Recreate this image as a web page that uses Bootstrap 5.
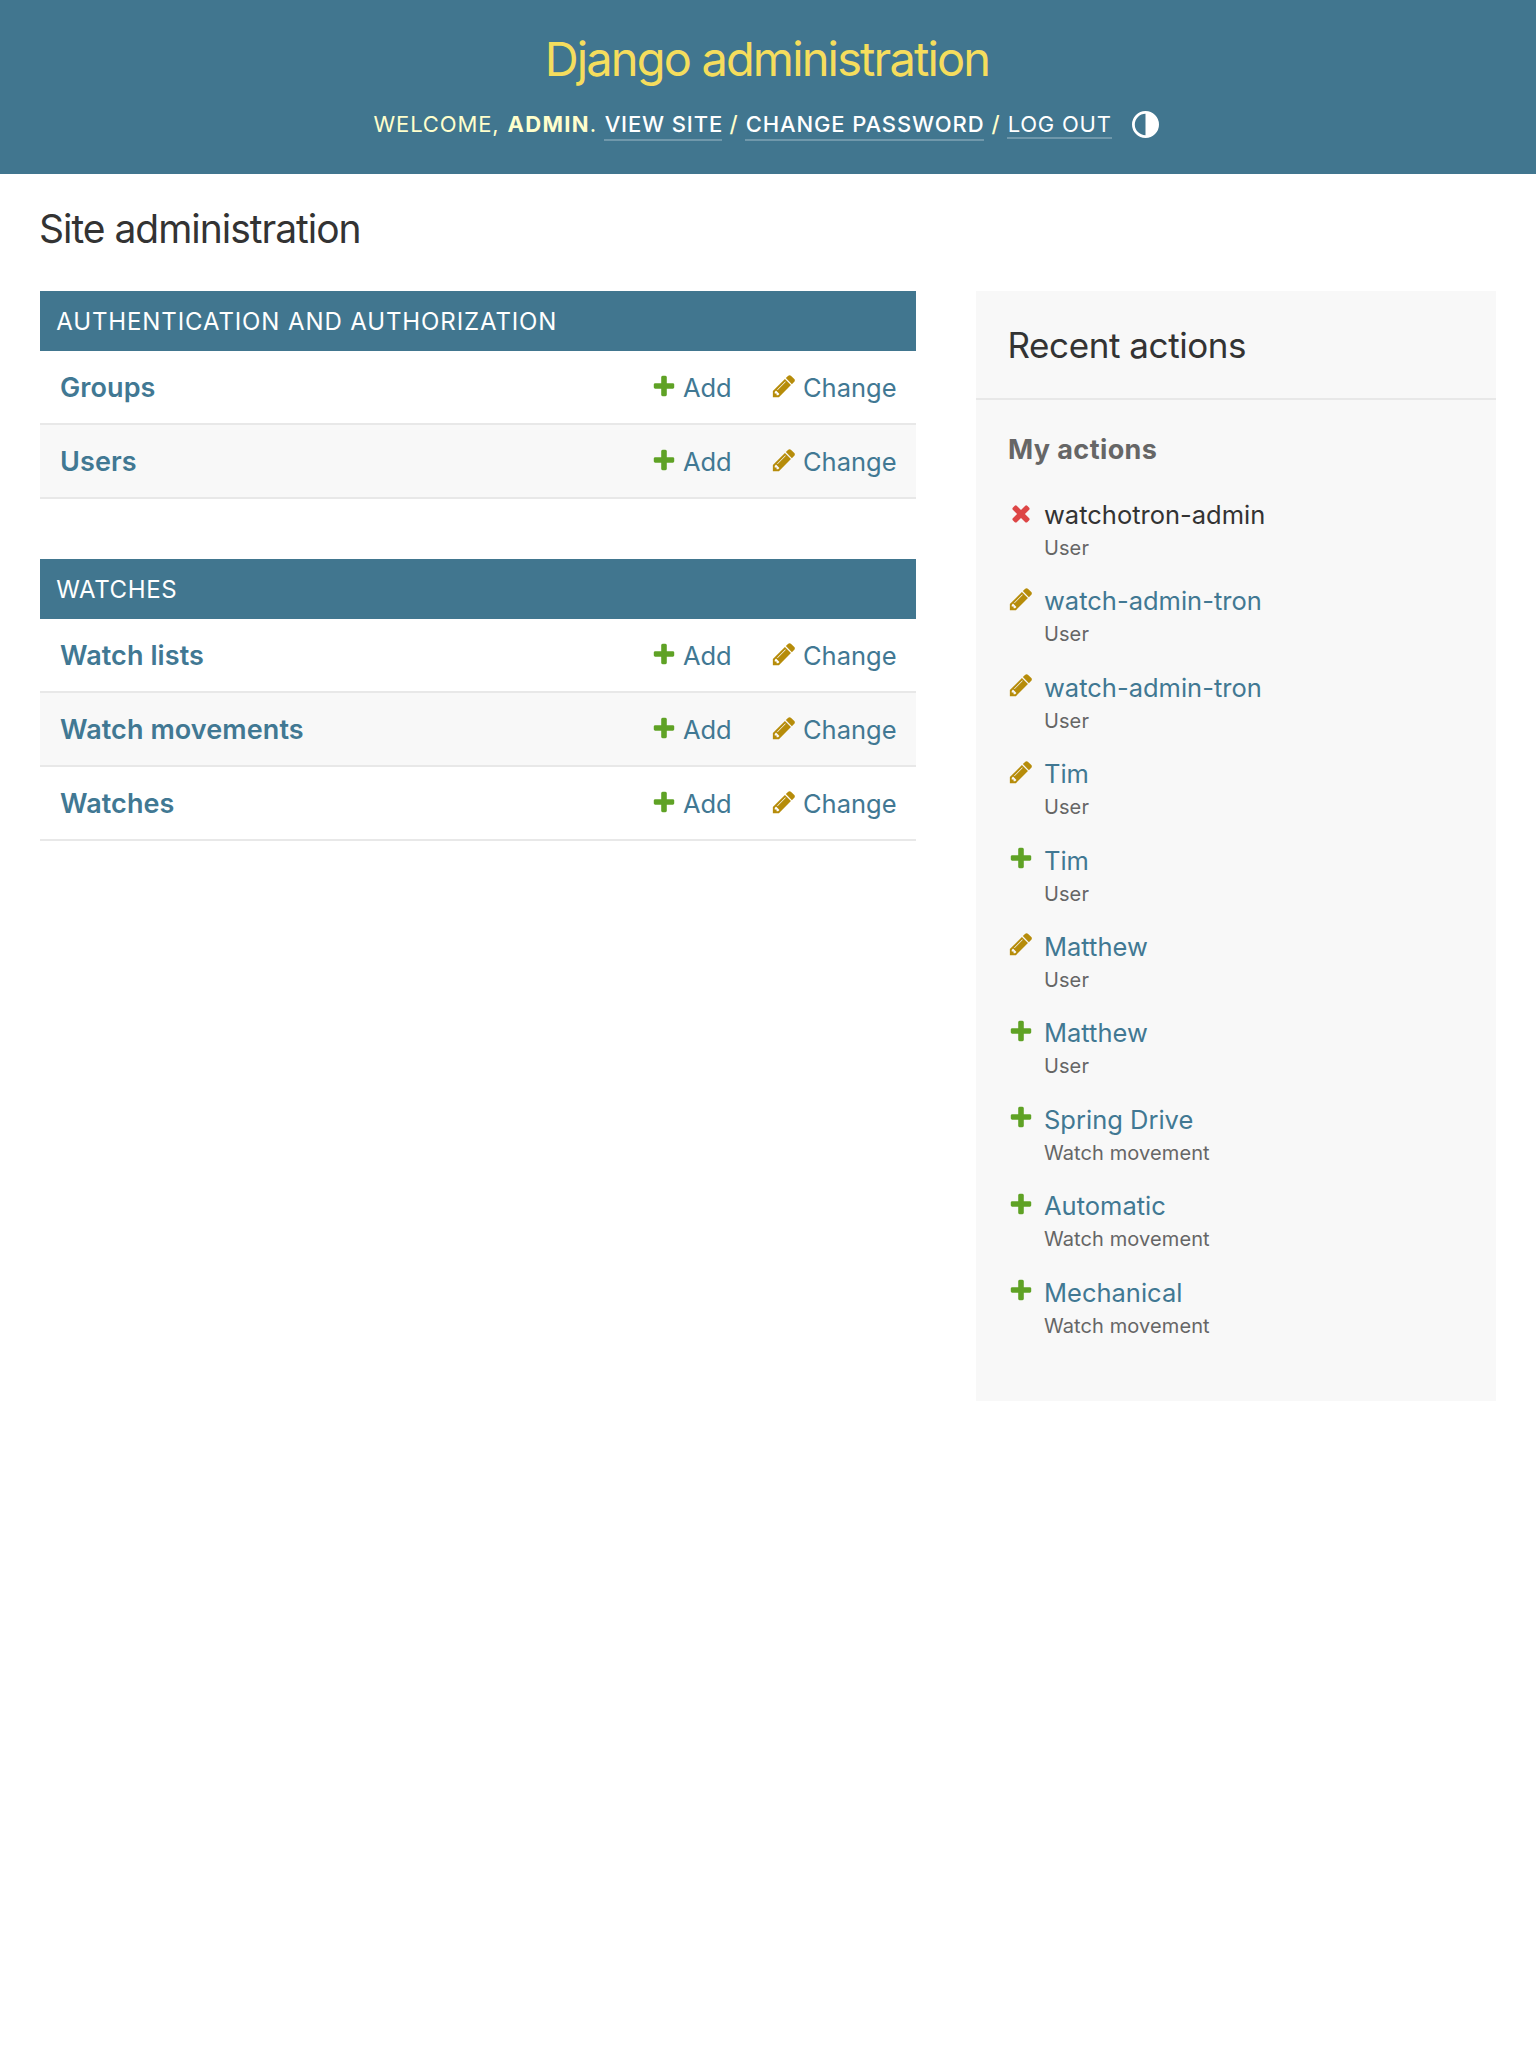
<!DOCTYPE html>
<html lang="en">
<head>
<meta charset="utf-8">
<meta name="viewport" content="width=device-width, initial-scale=1">
<title>Site administration | Django site admin</title>
<link rel="stylesheet" href="https://cdn.jsdelivr.net/npm/bootstrap@5.3.0/dist/css/bootstrap.min.css">
<style>
:root{--teal:#41768f;--link-c:#417893;--hair:#e8e8e8;--soft:#f8f8f8}
body{font-family:Inter,"Liberation Sans",sans-serif;color:#333;background:#fff}
a{color:var(--link-c);text-decoration:none}
.site-head{background:var(--teal);height:174px;padding-top:29px}
.site-title{font-size:47px;line-height:60px;font-weight:400;letter-spacing:-1.86px;color:#f5dd5d;padding-right:2px}
.user-tools{margin-top:20px;margin-right:3.4px;font-size:22px;line-height:30px;letter-spacing:.86px;color:#ffffcc;height:32px}
.user-tools a{color:#fff;border-bottom:2px solid rgba(255,255,255,.25);padding-left:.6px}
.w-hello{width:134px}.w-name{width:96.5px}
.w-name b{letter-spacing:1.3px}
.w-view{width:118px}.w-pass{width:239px;letter-spacing:.88px}
.w-view,.w-pass,.w-sep{font-weight:500}
.w-out{width:105px;height:30px;letter-spacing:.76px}
.w-sep{width:23px;padding-left:1px}
.theme-icon{width:27px;height:27px;margin:2px 0 0 20px}
.page-body{padding:30px 40px 0}
.page-title{font-size:39px;line-height:50px;font-weight:400;letter-spacing:-1.02px;margin:0 0 37px -1px}
.main-col{width:876px}
.side-col{width:520px;height:1110px;background:var(--soft)}
.app-module{margin-bottom:60px}
.app-caption{background:var(--teal);color:#fff;font-size:24px;height:60px;line-height:62px;font-weight:400;letter-spacing:.89px;padding-left:16.2px}
.app-caption.tight{letter-spacing:.6px}
.model-row{height:74px;border-bottom:2px solid var(--hair);padding-left:20px}
.model-row.shaded{background:var(--soft)}
.model-name{font-size:27px;line-height:74px;height:72px;font-weight:600;letter-spacing:.09px}
.act{font-size:25.5px;line-height:73px;height:72px;gap:6.2px}
.act svg{margin-top:22.2px}
.act-add{width:119.6px;letter-spacing:-.15px}.act-change{width:145.5px}
.act-change svg{margin-left:.3px}
.ico{width:26px;height:26px;flex:none}
.side-title{font-size:35px;line-height:108px;height:109px;font-weight:400;letter-spacing:-.42px;border-bottom:2px solid var(--hair);padding-left:31.5px}
.side-sub{font-size:27px;line-height:40px;font-weight:700;color:#666;letter-spacing:.4px;padding:30px 0 0 32px}
.act-list{padding:28.1px 0 0 31.8px}
.act-item{height:86.4px;gap:10.2px}
.act-item svg{margin-top:1.3px}
.act-item:first-child svg{margin:2px -.5px 0 .5px}
.act-title{font-size:25.5px;line-height:34px}
.act-kind{font-size:20px;line-height:30px;margin-top:1px;color:#666;letter-spacing:.1px}
</style>
</head>
<body>
<svg class="d-none" xmlns="http://www.w3.org/2000/svg">
<symbol id="i-add" viewBox="0 0 1792 1792"><path fill="#5fa225" d="M1600 796v192q0 40-28 68t-68 28h-416v416q0 40-28 68t-68 28h-192q-40 0-68-28t-28-68v-416h-416q-40 0-68-28t-28-68v-192q0-40 28-68t68-28h416v-416q0-40 28-68t68-28h192q40 0 68 28t28 68v416h416q40 0 68 28t28 68z"/></symbol>
<symbol id="i-change" viewBox="0 0 1792 1792"><path fill="#b68c0a" d="M491 1536l91-91-235-235-91 91v107h128v128h107zm523-928q0-22-22-22-10 0-17 7l-542 542q-7 7-7 17 0 22 22 22 10 0 17-7l542-542q7-7 7-17zm-54-192l416 416-832 832h-416v-416zm683 96q0 53-37 90l-166 166-416-416 166-165q36-38 90-38 53 0 91 38l235 234q37 39 37 91z"/></symbol>
<symbol id="i-delete" viewBox="0 0 1792 1792"><path fill="#dd4646" d="M1490 1322q0 40-28 68l-136 136q-28 28-68 28t-68-28l-294-294-294 294q-28 28-68 28t-68-28l-136-136q-28-28-28-68t28-68l294-294-294-294q-28-28-28-68t28-68l136-136q28-28 68-28t68 28l294 294 294-294q28-28 68-28t68 28l136 136q28 28 28 68t-28 68l-294 294 294 294q28 28 28 68z"/></symbol>
</svg>

<header class="site-head text-center">
  <h1 class="site-title mb-0">Django administration</h1>
  <div class="user-tools d-flex justify-content-center text-start text-nowrap">
    <span class="w-hello">WELCOME,</span>
    <span class="w-name"><b>ADMIN</b>.</span>
    <a class="w-view" href="#">VIEW SITE</a>
    <span class="w-sep text-center">/</span>
    <a class="w-pass" href="#">CHANGE PASSWORD</a>
    <span class="w-sep text-center">/</span>
    <a class="w-out" href="#">LOG OUT</a>
    <svg class="theme-icon" viewBox="0 0 27 27"><circle cx="13.5" cy="13.5" r="12.1" fill="none" stroke="#fff" stroke-width="2.8"/><path d="M13.5 1a12.5 12.5 0 0 1 0 25z" fill="#fff"/></svg>
  </div>
</header>

<main class="page-body">
  <h2 class="page-title">Site administration</h2>
  <div class="d-flex justify-content-between align-items-start">
    <div class="main-col">
      <section class="app-module">
        <h3 class="app-caption mb-0">AUTHENTICATION AND AUTHORIZATION</h3>
        <div class="model-row d-flex"><a class="model-name me-auto" href="#">Groups</a><a class="act act-add d-flex" href="#"><svg class="ico"><use href="#i-add"/></svg>Add</a><a class="act act-change d-flex" href="#"><svg class="ico"><use href="#i-change"/></svg>Change</a></div>
        <div class="model-row shaded d-flex"><a class="model-name me-auto" href="#">Users</a><a class="act act-add d-flex" href="#"><svg class="ico"><use href="#i-add"/></svg>Add</a><a class="act act-change d-flex" href="#"><svg class="ico"><use href="#i-change"/></svg>Change</a></div>
      </section>
      <section class="app-module">
        <h3 class="app-caption tight mb-0">WATCHES</h3>
        <div class="model-row d-flex"><a class="model-name me-auto" href="#">Watch lists</a><a class="act act-add d-flex" href="#"><svg class="ico"><use href="#i-add"/></svg>Add</a><a class="act act-change d-flex" href="#"><svg class="ico"><use href="#i-change"/></svg>Change</a></div>
        <div class="model-row shaded d-flex"><a class="model-name me-auto" href="#">Watch movements</a><a class="act act-add d-flex" href="#"><svg class="ico"><use href="#i-add"/></svg>Add</a><a class="act act-change d-flex" href="#"><svg class="ico"><use href="#i-change"/></svg>Change</a></div>
        <div class="model-row d-flex"><a class="model-name me-auto" href="#">Watches</a><a class="act act-add d-flex" href="#"><svg class="ico"><use href="#i-add"/></svg>Add</a><a class="act act-change d-flex" href="#"><svg class="ico"><use href="#i-change"/></svg>Change</a></div>
      </section>
    </div>
    <aside class="side-col">
      <h2 class="side-title mb-0">Recent actions</h2>
      <h3 class="side-sub mb-0">My actions</h3>
      <ul class="act-list list-unstyled mb-0">
        <li class="act-item d-flex"><svg class="ico"><use href="#i-delete"/></svg><div><div class="act-title">watchotron-admin</div><div class="act-kind">User</div></div></li>
        <li class="act-item d-flex"><svg class="ico"><use href="#i-change"/></svg><div><div class="act-title"><a href="#">watch-admin-tron</a></div><div class="act-kind">User</div></div></li>
        <li class="act-item d-flex"><svg class="ico"><use href="#i-change"/></svg><div><div class="act-title"><a href="#">watch-admin-tron</a></div><div class="act-kind">User</div></div></li>
        <li class="act-item d-flex"><svg class="ico"><use href="#i-change"/></svg><div><div class="act-title"><a href="#">Tim</a></div><div class="act-kind">User</div></div></li>
        <li class="act-item d-flex"><svg class="ico"><use href="#i-add"/></svg><div><div class="act-title"><a href="#">Tim</a></div><div class="act-kind">User</div></div></li>
        <li class="act-item d-flex"><svg class="ico"><use href="#i-change"/></svg><div><div class="act-title"><a href="#">Matthew</a></div><div class="act-kind">User</div></div></li>
        <li class="act-item d-flex"><svg class="ico"><use href="#i-add"/></svg><div><div class="act-title"><a href="#">Matthew</a></div><div class="act-kind">User</div></div></li>
        <li class="act-item d-flex"><svg class="ico"><use href="#i-add"/></svg><div><div class="act-title"><a href="#">Spring Drive</a></div><div class="act-kind">Watch movement</div></div></li>
        <li class="act-item d-flex"><svg class="ico"><use href="#i-add"/></svg><div><div class="act-title"><a href="#">Automatic</a></div><div class="act-kind">Watch movement</div></div></li>
        <li class="act-item d-flex"><svg class="ico"><use href="#i-add"/></svg><div><div class="act-title"><a href="#">Mechanical</a></div><div class="act-kind">Watch movement</div></div></li>
      </ul>
    </aside>
  </div>
</main>
<script src="https://cdn.jsdelivr.net/npm/bootstrap@5.3.0/dist/js/bootstrap.bundle.min.js"></script>
</body>
</html>
